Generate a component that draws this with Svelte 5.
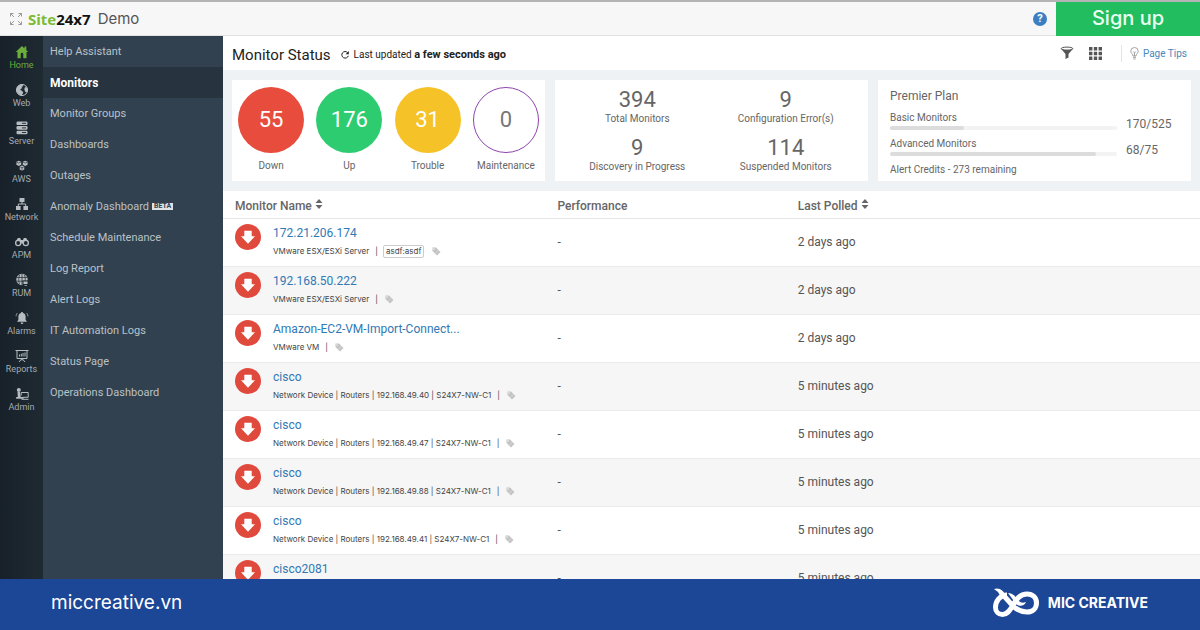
<script>
  const rail = [
    { id: 'home', label: 'Home' },
    { id: 'web', label: 'Web' },
    { id: 'server', label: 'Server' },
    { id: 'aws', label: 'AWS' },
    { id: 'network', label: 'Network' },
    { id: 'apm', label: 'APM' },
    { id: 'rum', label: 'RUM' },
    { id: 'alarms', label: 'Alarms' },
    { id: 'reports', label: 'Reports' },
    { id: 'admin', label: 'Admin' }
  ];
  const menu = [
    'Help Assistant', 'Monitors', 'Monitor Groups', 'Dashboards', 'Outages', 'Anomaly Dashboard',
    'Schedule Maintenance', 'Log Report', 'Alert Logs', 'IT Automation Logs', 'Status Page', 'Operations Dashboard'
  ];
  const statuses = [
    { n: 55, label: 'Down', kind: 'down' },
    { n: 176, label: 'Up', kind: 'up' },
    { n: 31, label: 'Trouble', kind: 'trouble' },
    { n: 0, label: 'Maintenance', kind: 'maint' }
  ];
  const stats = [
    { n: 394, label: 'Total Monitors' },
    { n: 9, label: 'Configuration Error(s)' },
    { n: 9, label: 'Discovery in Progress' },
    { n: 114, label: 'Suspended Monitors' }
  ];
  const plan = [
    { label: 'Basic Monitors', used: 170, total: 525 },
    { label: 'Advanced Monitors', used: 68, total: 75 }
  ];
  const rows = [
    { name: '172.21.206.174', info: 'VMware ESX/ESXi Server', tag: 'asdf:asdf', polled: '2 days ago' },
    { name: '192.168.50.222', info: 'VMware ESX/ESXi Server', polled: '2 days ago' },
    { name: 'Amazon-EC2-VM-Import-Connect...', info: 'VMware VM', polled: '2 days ago' },
    { name: 'cisco', info: 'Network Device | Routers | 192.168.49.40 | S24X7-NW-C1', polled: '5 minutes ago' },
    { name: 'cisco', info: 'Network Device | Routers | 192.168.49.47 | S24X7-NW-C1', polled: '5 minutes ago' },
    { name: 'cisco', info: 'Network Device | Routers | 192.168.49.88 | S24X7-NW-C1', polled: '5 minutes ago' },
    { name: 'cisco', info: 'Network Device | Routers | 192.168.49.41 | S24X7-NW-C1', polled: '5 minutes ago' },
    { name: 'cisco2081', polled: '5 minutes ago' }
  ];
</script>

{#snippet sortIcon()}
  <svg class="sort" viewBox="0 0 8 12" width="8" height="12" aria-hidden="true">
    <path d="M4 1 7.500 5h-7zM4 11 .5 7h7z" fill="#666" />
  </svg>
{/snippet}

{#snippet railIcon(id)}
  <svg viewBox="0 0 16 16" width="16" height="16" fill="currentColor" aria-hidden="true">
    {#if id === 'home'}
      <path d="M8 2 1.800 8h1.700v6.200h3.200V10a1.300 1.300 0 0 1 2.600 0v4.200h3.200V8h1.700L12.300 6.200V2.600h-1.800v1.800z" />
    {:else if id === 'web'}
      <circle cx="8" cy="8" r="5.600" fill="none" stroke="currentColor" stroke-width="1" />
      <path d="M3 5.500C4 3.600 6 2.500 8.200 2.500L9.400 4 7.500 5l1 1.300-1.500.2-.7 1.600 2 .8 1 1.800-1.600 2.800C5.500 13.300 2.500 11 2.500 8zM11 5l2 .6.6 2.600-1 2.300-1.500-.8-.8-2.400z" />
    {:else if id === 'server'}
      <rect x="2.500" y="1.500" width="11" height="3.600" rx="1.200" />
      <rect x="2.500" y="6.100" width="11" height="3.600" rx="1.200" />
      <rect x="2.500" y="10.700" width="11" height="3.600" rx="1.200" />
      <path d="M8 3.300h4M8 7.900h4M8 12.500h4" stroke="#1b262e" stroke-width=".9" />
    {:else if id === 'aws'}
      <path d="m4.800 2.800 2.400 1v2.900L4.800 7.900 2.400 6.700V3.800zM11.200 2.800l2.400 1v2.900l-2.400 1.200-2.400-1.200V3.800zM8 7.500l2.300 1v3L8 12.800l-2.300-1.300v-3z" />
      <path d="m2.400 4 2.400 1 2.400-1M8.800 4l2.400 1 2.400-1M5.700 8.700 8 9.700l2.300-1M8 9.700v3" stroke="#1b262e" stroke-width=".6" fill="none" />
    {:else if id === 'network'}
      <path d="M5.500 2h5v4h-5zM2 10h4.600v4H2zM9.400 10H14v4H9.400z" />
      <path d="M8 6v2M4.300 10V8h7.400v2" stroke="currentColor" fill="none" />
    {:else if id === 'apm'}
      <path d="M3.800 4h2.400l.8 2h2l.8-2h2.400l2.600 4.500-3.600 2.500L8 9.300 4.800 11 1.200 8.500z" />
      <circle cx="4.200" cy="9" r="3.200" />
      <circle cx="11.800" cy="9" r="3.200" />
      <circle cx="4.200" cy="9" r="1.900" fill="#1b262e" />
      <circle cx="11.800" cy="9" r="1.900" fill="#1b262e" />
    {:else if id === 'rum'}
      <circle cx="8" cy="7.500" r="5.700" />
      <path d="M8 2v11M2.500 5.500h11M2.500 9.200h11M5.500 3C4.400 6 4.400 9 5.500 12M10.500 3c1.100 3 1.100 6 0 9" stroke="#1b262e" stroke-width=".7" fill="none" />
      <path d="M8.500 8.500H14V14H8.500z" fill="#1b262e" />
      <path d="M9.500 9.500h4v2.600h-4zM10.500 13h2.500v.8h-2.500z" />
    {:else if id === 'alarms'}
      <path d="M8 2c.7 0 1 .4 1 .9 1.700.5 2.600 1.900 2.600 3.700v3.200l1.400 2H3l1.400-2V6.600c0-1.800.9-3.200 2.600-3.700 0-.5.3-.9 1-.9zM6.700 12.400h2.600c0 2-2.600 2-2.600 0z" />
      <path d="M3.500 3C2.500 4 2.100 5 2.100 6.300M12.500 3c1 1 1.400 2 1.400 3.300" stroke="currentColor" stroke-width=".8" fill="none" />
    {:else if id === 'reports'}
      <path d="M1.500 2.500h13M3 2.500v8h10v-8M8 10.500v2M8 10.500 5 14M8 10.500l3 3.500M5.500 8.500v-2M7.300 8.500V5.800M9 8.500V5M11 8.500V4.500" stroke="currentColor" fill="none" />
    {:else}
      <circle cx="4.800" cy="4" r="2" />
      <path d="M3.500 6h2.400l.8 5h3v1.800H2.200V11h1.600z" />
      <path d="M7.200 6.500h7v4.800h-5M7.200 6.500v3M7.500 13.300h7" stroke="currentColor" fill="none" />
    {/if}
  </svg>
{/snippet}

<div class="page">
  <header class="top">
    <svg class="expand" viewBox="0 0 14 14" width="14" height="14" fill="none" stroke="#999" aria-hidden="true">
      <path d="M1.500 4.500v-3h3M1.500 1.500l3.500 3.500M9.500 1.500h3v3M12.500 1.500 9 5M1.500 9.500v3h3M1.500 12.500 5 9M12.500 9.500v3h-3M12.500 12.500 9 9" />
    </svg>
    <a class="brand" href="#home"><span>Site</span>24x7</a>
    <span class="demo">Demo</span>
    <button class="help" aria-label="Help">?</button>
    <a class="signup" href="#signup">Sign up</a>
  </header>

  <div class="body">
    <nav class="rail" aria-label="Sections">
      {#each rail as r}
        <a href="#{r.id}" class:on={r.id === 'home'}>{@render railIcon(r.id)}<span>{r.label}</span></a>
      {/each}
    </nav>
    <nav class="menu" aria-label="Home">
      {#each menu as m}
        <a href="#menu" class:on={m === 'Monitors'}>{m}{#if m === 'Anomaly Dashboard'}<b>BETA</b>{/if}</a>
      {/each}
    </nav>

    <main>
      <div class="title">
        <h1>Monitor Status</h1>
        <button class="icon refresh" aria-label="Refresh">
          <svg viewBox="0 0 10 10" width="10" height="10"><path d="M7.600 2.600A3.300 3.300 0 1 0 8.300 5.800" fill="none" stroke="#222" stroke-width="1" /><path d="M8.800 1v3.200H5.600z" fill="#222" /></svg>
        </button>
        <p>Last updated <b>a few seconds ago</b></p>
        <div class="tools">
          <button class="icon" aria-label="Filter">
            <svg viewBox="0 0 14 14" width="14" height="14"><path d="M1 2.800 5.500 8v5l3-1.500V8L13 2.800z" fill="#555" /><ellipse cx="7" cy="2.600" rx="5.800" ry="1.500" fill="#fff" stroke="#555" /></svg>
          </button>
          <button class="icon" aria-label="Grid view">
            <svg viewBox="0 0 13 13" width="13" height="13" fill="#555"><path d="M0 0h3.400v3.400H0zM4.800 0h3.400v3.400H4.800zM9.600 0H13v3.400H9.600zM0 4.800h3.400v3.400H0zM4.800 4.800h3.400v3.400H4.800zM9.600 4.800H13v3.400H9.600zM0 9.600h3.400V13H0zM4.800 9.600h3.400V13H4.800zM9.600 9.600H13V13H9.600z" /></svg>
          </button>
          <a class="tips" href="#tips">
            <svg viewBox="0 0 9 13" width="9" height="13" fill="none" stroke="#999" stroke-width=".9" aria-hidden="true"><path d="M3 9C3 7 .8 6.500.8 4.200a3.700 3.700 0 0 1 7.400 0C8.200 6.500 6 7 6 9zM3 10.400h3M3.400 12h2.200M3.300 4.500 4.500 6l1.200-1.500M4.500 6v3" /></svg>
            Page Tips
          </a>
        </div>
      </div>

      <div class="cards">
        <section class="card circles">
          {#each statuses as s}
            <div class="status"><span class="ball {s.kind}">{s.n}</span><span>{s.label}</span></div>
          {/each}
        </section>
        <section class="card stats">
          {#each stats as s}
            <div><strong>{s.n}</strong><span>{s.label}</span></div>
          {/each}
        </section>
        <section class="card plan">
          <h2>Premier Plan</h2>
          {#each plan as p}
            <div class="quota">
              <div class="meter"><span>{p.label}</span><div class="bar"><i style="width: {(p.used / p.total) * 100}%"></i></div></div>
              <span class="used">{p.used}/{p.total}</span>
            </div>
          {/each}
          <p>Alert Credits - 273 remaining</p>
        </section>
      </div>

      <table>
        <colgroup><col class="c1" /><col class="c2" /><col /></colgroup>
        <thead>
          <tr>
            <th>Monitor Name {@render sortIcon()}</th>
            <th>Performance</th>
            <th>Last Polled {@render sortIcon()}</th>
          </tr>
        </thead>
        <tbody>
          {#each rows as r}
            <tr>
              <td>
                <div class="mon">
                  <svg viewBox="0 0 26 26" width="26" height="26" role="img" aria-label="Down"><circle cx="13" cy="13" r="13" fill="#df4a3d" /><path d="M9.300 6.800h7.400v5.400H20L13 19.800 6 12.200h3.300z" fill="#fff" /></svg>
                  <div>
                    <a href="#monitor">{r.name}</a>
                    {#if r.info}
                      <div class="info">
                        <span>{r.info}</span><span class="sep">|</span>
                        {#if r.tag}<span class="tag">{r.tag}</span>{/if}
                        <svg viewBox="0 0 9 9" width="9" height="9" aria-hidden="true"><path d="M.5.5H4L8.500 5 5 8.500.5 4z" fill="#c4c4c4" /><circle cx="2" cy="2" r=".7" fill="#fff" /><path d="m3.200 6.500 3.300-3.300" stroke="#e4e4e4" stroke-width=".6" /></svg>
                      </div>
                    {/if}
                  </div>
                </div>
              </td>
              <td>-</td>
              <td>{r.polled}</td>
            </tr>
          {/each}
        </tbody>
      </table>
    </main>
  </div>

  <footer>
    <a href="#site">miccreative.vn</a>
    <div class="mic">
      <svg viewBox="0 0 48 30" width="48" height="30" fill="none" stroke="#fff" stroke-width="5" aria-hidden="true">
        <path d="M15 7C8 7 3.500 13 3.500 19.500 3.500 23.500 6.500 26.500 10.500 26.500 15 26.500 17.500 23 20.500 18 24.500 11 28 6 35 6 41 6 44.500 10 44.500 15S41 24 35 24C29 24 25 22 21 18L12 8" />
        <path d="M2 1C8-1 11 3 14 7L11 10C8 8 7 6 6 4zM16 5C22 5 24 10 27 13 29 15 31 15 34 14 33 18 27 19 24 16z" fill="#fff" stroke="none" />
      </svg>
      <span>MIC CREATIVE</span>
    </div>
  </footer>
</div>

<style>
  :global(body) { margin: 0; }
  .page {
    display: flex; flex-direction: column; height: 100vh; overflow: hidden;
    font-family: Roboto, "Liberation Sans", sans-serif; font-size: 12px; color: #555; background: #fff;
  }
  a { color: inherit; text-decoration: none; }
  h1, h2, p { margin: 0; font-weight: 400; }
  button { border: 0; padding: 0; background: none; font: inherit; cursor: pointer; }
  .icon, .icon svg { display: block; }

  .top {
    display: flex; align-items: center; flex: none; height: 33px;
    border-top: 2px solid #b4b4b4; border-bottom: 1px solid #e2e2e2; background: #f7f7f7;
  }
  .expand { margin: 0 5px 0 9px; }
  .brand { font: 700 15px "Open Sans", sans-serif; color: #111; }
  .brand span { color: #7dbb35; }
  .demo { margin-left: 7px; font: 15px Inter, sans-serif; color: #555; }
  .help {
    width: 14px; height: 14px; margin: 0 9px 0 auto; border-radius: 50%;
    background: #3c7fc0; color: #fff; font-size: 11px; line-height: 14px; font-weight: 700;
  }
  .signup {
    width: 144px; align-self: stretch; margin-bottom: -1px; background: #22bd5f; color: #eafff0;
    font: 500 20px/33px Inter, sans-serif; text-align: center;
  }

  .body { display: flex; flex: 1; min-height: 0; }
  .rail { flex: none; width: 43px; padding-top: 8px; background: linear-gradient(90deg, #18212a, #1e2a32); color: #b6bcc0; }
  .rail a { display: flex; flex-direction: column; align-items: center; height: 38px; font-size: 9px; line-height: 10px; }
  .rail span { color: #a4abb0; }
  .rail .on, .rail .on span { color: #6cae3a; }
  .menu { flex: none; width: 180px; background: #31414f; color: #bac2c8; }
  .menu a { display: flex; align-items: center; height: 31px; padding-left: 7px; font-size: 11px; }
  .menu .on { background: #27333f; color: #fff; font-weight: 700; font-size: 12px; }
  .menu b { margin-left: 3px; padding: 0 2px; background: #dfe3e6; color: #31414f; font-size: 7px; line-height: 7px; }

  main { flex: 1; min-width: 0; overflow: hidden; }
  .title { display: flex; align-items: center; height: 34px; padding: 0 13px 0 9px; color: #222; }
  h1, .title p, .refresh { padding-top: 3px; }
  h1 { font-size: 15px; }
  .refresh { margin: 0 4px 0 9px; }
  .title p { font-size: 10px; }
  .title b { font-size: 11px; }
  .tools { display: flex; align-items: center; gap: 15px; margin-left: auto; }
  .tips {
    display: flex; align-items: center; gap: 4px; height: 17px; margin-left: 4px; padding-left: 8px;
    border-left: 1px solid #e4e4e4; font-size: 10px; color: #4788bb;
  }

  .cards { display: grid; grid-template-columns: repeat(3, 1fr); gap: 10px; padding: 10px 9px; background: #eff2f4; }
  .card { box-sizing: border-box; height: 101px; background: #fff; font-size: 10px; color: #666; }
  .circles { display: grid; grid-template-columns: repeat(4, 1fr); padding-top: 7px; }
  .status { display: flex; flex-direction: column; align-items: center; gap: 7px; line-height: 12px; }
  .ball {
    box-sizing: border-box; width: 66px; height: 66px; border-radius: 50%;
    color: #fff; font-size: 22px; line-height: 66px; text-align: center;
  }
  .down { background: #e74c3c; }
  .up { background: #2ecc71; }
  .trouble { background: #f5c228; }
  .maint { border: 1px solid #8e44ad; color: #777; line-height: 64px; }
  .stats { display: grid; grid-template-columns: 1fr 1fr; align-content: start; padding: 8px 8px 0; text-align: center; }
  .stats div { height: 48px; }
  .stats strong { display: block; font-size: 22px; line-height: 24px; font-weight: 400; }
  .stats span { display: block; line-height: 14px; }
  .plan { padding: 9px 12px 0; line-height: 12px; }
  .plan h2 { margin-bottom: 9px; font-size: 12px; line-height: 14px; }
  .quota { display: grid; grid-template-columns: 1fr 53px; gap: 9px; height: 26px; font-size: 10px; }
  .bar { height: 4px; margin-top: 2px; border-radius: 2px; background: #f3f3f3; }
  .bar i { display: block; height: 4px; border-radius: 2px; background: #dcdcdc; }
  .used { padding-top: 5px; font-size: 12px; line-height: 14px; }

  table { width: 100%; border-collapse: collapse; table-layout: fixed; }
  .c1 { width: 33%; }
  .c2 { width: 24.600%; }
  th {
    height: 27px; box-sizing: border-box; padding: 3px 12px 0; border-bottom: 1px solid #e6e6e6;
    text-align: left; font-size: 12px; font-weight: 500; color: #666;
  }
  td { height: 48px; box-sizing: border-box; padding: 0 12px; border-bottom: 1px solid #ececec; }
  td:first-child { padding-right: 0; }
  tbody tr:nth-child(even) { background: #f6f6f6; }
  .mon { display: flex; gap: 12px; height: 37px; }
  .mon > svg { flex: none; }
  .mon a { display: block; font-size: 12px; line-height: 18px; color: #3079b5; }
  .info { display: flex; align-items: center; height: 19px; font-family: Inter, sans-serif; font-size: 8px; color: #444; white-space: nowrap; }
  .sep { margin: 0 5px 0 6px; }
  .info svg { margin-left: 2px; }
  .tag { margin-right: 6px; padding: 0 2px; border: 1px solid #ccc; border-radius: 2px; line-height: 11px; }

  footer {
    display: flex; align-items: center; justify-content: space-between; flex: none; height: 51px;
    padding: 0 52px 4px 51px; box-sizing: border-box; background: #1c4696; color: #fff; font-family: Inter, sans-serif;
  }
  footer a { font-size: 19px; }
  .mic { display: flex; align-items: center; gap: 8px; font-size: 14px; font-weight: 700; }
</style>
